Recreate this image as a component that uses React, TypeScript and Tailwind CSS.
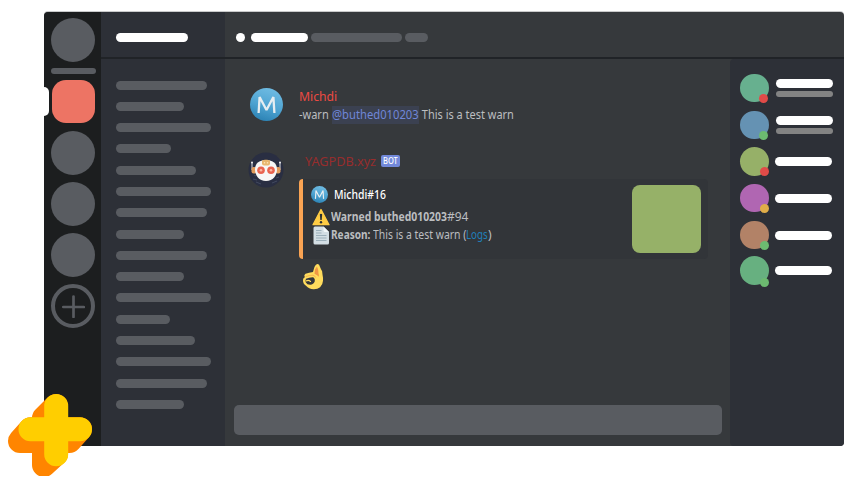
import { useLayoutEffect, useRef, type ReactNode } from 'react';

const channels = [
  'w-[91px]', 'w-[68px]', 'w-[95px]', 'w-[55px]', 'w-[80px]', 'w-[95px]', 'w-[91px]', 'w-[68px]',
  'w-[91px]', 'w-[68px]', 'w-[95px]', 'w-[54px]', 'w-[79px]', 'w-[95px]', 'w-[91px]', 'w-[68px]',
];

const members = [
  { avatar: 'bg-[#67b08f]', status: 'bg-[#e04b48]', detail: true, gap: 'mt-[15px]' },
  { avatar: 'bg-[#6592b3]', status: 'bg-[#6cba70]', detail: true, gap: 'mt-[9px]' },
  { avatar: 'bg-[#96b068]', status: 'bg-[#e04b48]', detail: false, gap: 'mt-[8.5px]' },
  { avatar: 'bg-[#b066b2]', status: 'bg-[#e0ad48]', detail: false, gap: 'mt-[8.5px]' },
  { avatar: 'bg-[#b28267]', status: 'bg-[#6cba70]', detail: false, gap: 'mt-[9px]' },
  { avatar: 'bg-[#67b080]', status: 'bg-[#6cba70]', detail: false, gap: 'mt-[7.5px]' },
];

/* Condenses a run of text horizontally so that it occupies the given width. */
function Run({ width, className = '', children }: { width: number; className?: string; children: ReactNode }) {
  const ref = useRef<HTMLSpanElement>(null);
  useLayoutEffect(() => {
    const el = ref.current;
    if (el) el.style.transform = `scaleX(${width / el.offsetWidth})`;
  }, [width]);
  return (
    <span className={`inline-flex shrink-0 whitespace-pre ${className}`} style={{ width }}>
      <span ref={ref} className="inline-block shrink-0 origin-left">{children}</span>
    </span>
  );
}

function UserAvatar({ className }: { className: string }) {
  return (
    <svg viewBox="0 0 33 33" className={`shrink-0 ${className}`}>
      <defs>
        <linearGradient id="sky" x1="0.7" y1="0" x2="0.4" y2="1">
          <stop offset="0" stopColor="#70bce3" />
          <stop offset="0.55" stopColor="#4fa4d2" />
          <stop offset="1" stopColor="#2c83b5" />
        </linearGradient>
      </defs>
      <circle cx="16.5" cy="16.5" r="16.5" fill="url(#sky)" />
      <path d="M8.600 25 9.600 9 16.500 22 23.400 9 24.400 25" fill="none" stroke="#e6edf1" strokeWidth="2.300" strokeLinejoin="bevel" />
    </svg>
  );
}

function BotAvatar() {
  return (
    <svg viewBox="0 0 36 36" className="size-9 shrink-0">
      <circle cx="18" cy="18" r="17.5" fill="#292e42" />
      <path d="M5 27l4 1M8 30l5 2M24 31l5-2M28 26l3-1M6 23l2 1" stroke="#424a61" strokeWidth="1" />
      <path d="M4 10v8M32 10v8" stroke="#d8dbe1" strokeWidth="1" />
      <circle cx="4" cy="10.500" r="1" fill="#eee" />
      <circle cx="32" cy="10.500" r="1" fill="#eee" />
      <rect x="3.500" y="15" width="5" height="6.500" rx="2" fill="#e09b5c" />
      <rect x="27.500" y="15" width="5" height="6.500" rx="2" fill="#e09b5c" />
      <path d="M7 17.500C7 11.500 11 8 18 8S29 11.500 29 17.500c0 6-4 11.500-11 11.500S7 23.500 7 17.500Z" fill="#f7f6f5" />
      <path d="M14 8.600c2-1 6-1 8 0v3q0 2-2 2h-4q-2 0-2-2Z" fill="#e8b66e" />
      <path d="M16.500 10v1.500M19.500 10v1.500" stroke="#f8e2b4" strokeWidth="1.300" />
      <circle cx="13" cy="18.300" r="3.800" fill="#e9634f" />
      <circle cx="23" cy="18.300" r="3.800" fill="#e9634f" />
      <circle cx="13" cy="18.300" r="1.300" fill="#f9b9a5" />
      <circle cx="23" cy="18.300" r="1.300" fill="#f9b9a5" />
    </svg>
  );
}

function WarningIcon() {
  return (
    <svg viewBox="0 0 18 18" className="size-[18px] shrink-0">
      <path d="M9 1.500 17 16.700H1Z" fill="#fc4" stroke="#fc4" strokeWidth="1.300" strokeLinejoin="round" />
      <path d="M7.800 6.300q1.200-1.300 2.400 0L9.700 12H8.300Z" fill="#292f33" />
      <circle cx="9" cy="14.300" r="1.200" fill="#292f33" />
    </svg>
  );
}

function PageIcon() {
  return (
    <svg viewBox="0 0 16 19" className="h-[19px] w-4 shrink-0">
      <path d="M2 .5h8.500L16 6v11q0 1.500-1.500 1.500H2Q.5 18.500.5 17V2Q.5.500 2 .5Z" fill="#d3dee4" />
      <path d="M10.500.5 16 6h-4q-1.500 0-1.500-1.500Z" fill="#f2f7f9" />
      <path d="M3 4.500h5.500M3 7h5.500M3 9.500h10.500M3 12h10.500M3 14.500h10.500" stroke="#95aab5" strokeWidth="0.900" />
    </svg>
  );
}

function OkHand() {
  return (
    <svg viewBox="0 0 22 28" className="h-7 w-[22px]">
      <path d="M12.300 4.500q1.300-3.500 3.400-3.500 1.800.3 2 2.300l1.300 3q1.500 1.200 1.500 5.200.7 3 .5 6.300-.2 4-2.900 6.500-2.500 2-6.500 1.900-5-.2-7.300-3.200Q.800 21 1 17q.1-2.300 1.800-2.700-1.300-2.100.7-3.500 3.500-1.300 7.500-1.800Z" fill="#ffdc5d" />
      <path d="M13 6.500 15 3.500q1.500 3 1.500 7 .7 1.500.2 3.300-1-1.500-4.200-3Z" fill="#ef9645" />
      <path d="M4 13.500q3.500-1.400 7-1.300 2 .3 2.500 2" fill="none" stroke="#ef9645" strokeWidth="0.600" strokeLinecap="round" />
      <path d="M4 15.700q3.500-1.700 7.300-1.500 2.100 1.500 1.500 4-1.200 3.400-4.600 3.600-3.300 0-4.500-2.600-.5-2 .3-3.500Z" fill="#34373b" />
      <path d="M4.500 17.800q2-1 4 .6" fill="none" stroke="#ffdc5d" strokeWidth="1.300" strokeLinecap="round" />
    </svg>
  );
}

function PlusLogo() {
  return (
    <svg viewBox="0 386 100 90" className="absolute left-0 top-[386px] h-[90px] w-[100px]">
      <g fill="#ff8500" stroke="#ff8500" strokeWidth="24" strokeLinejoin="round">
        <path d="M56 406v48L44 465v-47Z" />
        <path d="M30.500 429.300H80L69.500 441H20Z" />
      </g>
      <path d="M56.200 406v48.200M30.500 429.300H80" stroke="#ffce00" strokeWidth="24" strokeLinecap="round" />
    </svg>
  );
}

function ServerRail() {
  return (
    <nav className="flex w-[57px] shrink-0 flex-col items-center rounded-l bg-[#1c1e1f] pl-px pt-[5.5px]">
      <div className="size-11 rounded-full bg-[#595c61]" />
      <div className="mt-[6.5px] h-1.5 w-[45px] rounded-full bg-[#595c61]" />
      <div className="relative mt-1.5 size-[43px] rounded-[14px] bg-[#ed7464]">
        <div className="absolute -left-2 top-[6.500px] h-[29.500px] w-[5px] rounded-r-[5px] bg-white" />
      </div>
      <div className="mt-[7.500px] flex flex-col gap-[7px]">
        <div className="size-11 rounded-full bg-[#595c61]" />
        <div className="size-11 rounded-full bg-[#595c61]" />
        <div className="size-11 rounded-full bg-[#595c61]" />
        <div className="flex size-11 items-center justify-center rounded-full border-4 border-[#595c61]">
          <svg viewBox="0 0 24 24" className="size-6 shrink-0" fill="none" stroke="#595c61" strokeWidth="2.700" strokeLinecap="round">
            <path d="M12.500 2.500v20.500M2.300 13h20.500" />
          </svg>
        </div>
      </div>
    </nav>
  );
}

function Messages() {
  return (
    <main className="flex w-[504.500px] shrink-0 flex-col px-[9px] pb-[11px]">
      <div className="flex h-[64px] items-start pl-4 pt-[29px]">
        <UserAvatar className="size-[33px]" />
        <div className="ml-4 flex flex-col">
          <Run width={38} className="h-[18px] text-[12.500px] leading-[17px] text-[#ed4a42]">Michdi</Run>
          <div className="flex h-[18px] text-[12px] leading-[18px] text-[#bcbec0]">
            <Run width={33}>{'-warn '}</Run>
            <Run width={87} className="bg-[#3b4151] text-[#7087d8]">@buthed010203</Run>
            <Run width={95}>{' This is a test warn'}</Run>
          </div>
        </div>
      </div>
      <div className="mt-[29px] flex items-start pl-3.5">
        <BotAvatar />
        <div className="ml-[15px] flex flex-col">
          <div className="flex h-[18px] items-center pl-[6px]">
            <Run width={71} className="text-[12.500px] leading-[17px] text-[#962d2d]">YAGPDB.xyz</Run>
            <div className="ml-[5px] flex h-3 w-[19px] items-center justify-center rounded-[2px] bg-[#7289da]">
              <Run width={15} className="text-[8.500px] font-medium leading-3 text-white">BOT</Run>
            </div>
          </div>
          <article className="mt-[9px] flex h-20 w-[409px] rounded border-l-[4px] border-[#f9a353] bg-[#323539]">
            <div className="flex flex-col pl-2 pt-1.5 text-[12px] text-[#bcbec0]">
              <div className="flex h-[19px] items-center">
                <UserAvatar className="size-[17px]" />
                <Run width={52} className="ml-1.5 font-medium leading-[18px] text-white">Michdi#16</Run>
              </div>
              <div className="flex h-[22px] items-center pl-px pt-1">
                <WarningIcon />
                <Run width={116} className="ml-px font-bold leading-[18px]">Warned buthed010203</Run>
                <Run width={21} className="leading-[18px]">#94</Run>
              </div>
              <div className="flex h-[18px] items-center pl-[2px]">
                <PageIcon />
                <Run width={42} className="ml-0.5 font-bold leading-[18px]">{'Reason: '}</Run>
                <Run width={93} className="leading-[18px]">{'This is a test warn ('}</Run>
                <Run width={22} className="leading-[18px] text-[#207fb9]">Logs</Run>
                <Run width={4} className="leading-[18px]">)</Run>
              </div>
            </div>
            <div className="ml-auto mr-[7px] mt-1.5 h-[68px] w-[69px] rounded-lg bg-[#96b168]" />
          </article>
          <div className="ml-[3px] mt-1"><OkHand /></div>
        </div>
      </div>
      <div className="mt-auto h-[30px] w-[488px] rounded-[5px] bg-[#595c61]" />
    </main>
  );
}

export default function App() {
  return (
    <div className="relative h-[480px] w-[854px] overflow-hidden bg-white pl-11 pt-3 font-['Noto_Sans',sans-serif]">
      <div className="flex h-[434px] w-[800px] overflow-hidden rounded bg-[#36393c] shadow-[0_-1px_0_#c9cacb]">
        <ServerRail />
        <aside className="w-[124px] shrink-0 bg-[#2d3037]">
          <div className="flex h-[47px] items-center border-b-2 border-[#202327] pl-[15px] pt-1.5">
            <div className="h-[9px] w-[72px] rounded-full bg-white" />
          </div>
          <div className="flex flex-col gap-[12.300px] pl-[14.500px] pt-[21.500px]">
            {channels.map((width, i) => (
              <div key={i} className={`h-[9px] rounded-full bg-[#595c61] ${width}`} />
            ))}
          </div>
        </aside>
        <div className="flex flex-1 flex-col">
          <header className="flex h-[47px] shrink-0 items-center border-b-2 border-[#202327] pl-[11px] pt-1.5">
            <div className="size-[9px] rounded-full bg-white" />
            <div className="ml-1.5 h-[9px] w-[57px] rounded-full bg-white" />
            <div className="ml-[3px] h-[9px] w-[91px] rounded-full bg-[#595c61]" />
            <div className="ml-[3px] h-[9px] w-[23px] rounded-full bg-[#595c61]" />
          </header>
          <div className="flex min-h-0 flex-1">
            <Messages />
            <aside className="flex flex-1 flex-col rounded-l bg-[#2d3037] pl-[10.500px]">
              {members.map((m, i) => (
                <div key={i} className={`flex h-7 items-center ${m.gap}`}>
                  <div className={`relative size-[28.500px] shrink-0 rounded-full ${m.avatar}`}>
                    <div className={`absolute size-[9px] rounded-full ${m.detail ? 'left-[19px]' : 'left-5'} ${i === 5 ? 'top-[21.500px]' : 'top-5'} ${m.status}`} />
                  </div>
                  <div className={`flex flex-col gap-[3.500px] ${m.detail ? 'ml-[7.500px]' : 'ml-1.5'}`}>
                    <div className="h-[9px] w-[57px] rounded-full bg-white" />
                    {m.detail && <div className="h-1.5 w-[57px] rounded-full bg-[#838383]" />}
                  </div>
                </div>
              ))}
            </aside>
          </div>
        </div>
      </div>
      <PlusLogo />
    </div>
  );
}
